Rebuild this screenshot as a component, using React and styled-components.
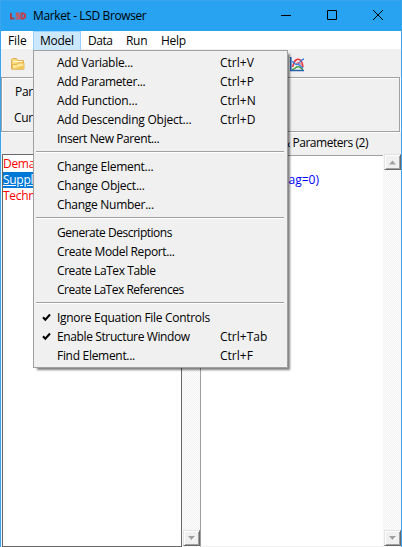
import React from "react";
import styled, { createGlobalStyle } from "styled-components";

const GlobalStyle = createGlobalStyle`
  * { box-sizing: border-box; }
  body { margin: 0; overflow: hidden; }
`;

const Window = styled.main`
  position: relative;
  display: flex;
  flex-direction: column;
  width: 402px;
  height: 547px;
  border: solid #3aa5ec;
  border-width: 0 1px;
  background: #f0f0f0;
  color: #000;
  font: 12px/16px "Open Sans", "Noto Sans", sans-serif;
  overflow: hidden;
  white-space: nowrap;
`;

const Label = styled.span`
  letter-spacing: ${(p) => p.$track ?? -0.3}px;
`;

const TitleBar = styled.header`
  display: flex;
  align-items: center;
  height: 31px;
  flex: none;
  padding-left: 8px;
  background: #27a3f2;
  border-top: 1px solid #3aa5ec;
`;

const Title = styled.h1`
  flex: 1;
  margin: 0 0 0 6px;
  font-size: 12px;
  font-weight: 400;
`;

const WindowButton = styled.button`
  display: flex;
  align-items: center;
  justify-content: center;
  width: 46px;
  height: 30px;
  padding: 0 0 2px;
  border: 0;
  background: none;
`;

const MenuBar = styled.nav`
  display: flex;
  flex: none;
  height: 18px;
  background: #fff;
`;

const MenuButton = styled.button`
  width: ${(p) => p.$width}px;
  height: 19px;
  padding: 0 0 0 ${(p) => p.$pad ?? 7}px;
  text-align: left;
  font: inherit;
  line-height: 18px;
  border: 1px solid ${(p) => (p.$open ? "#99d1ff" : "transparent")};
  border-width: 1px 1px 0;
  background: ${(p) => (p.$open ? "#cce8ff" : "transparent")};
`;

const Toolbar = styled.div`
  display: flex;
  justify-content: space-between;
  flex: none;
  height: 28px;
  padding: 8px 96px 0 9px;
`;

const InfoFrame = styled.section`
  display: flex;
  flex-direction: column;
  gap: 10px;
  flex: none;
  height: 55px;
  margin-right: 1px;
  padding: 6px 0 0 12px;
  border: 1px solid #a0a0a0;
  box-shadow: inset 1px 1px #fff, 0 1px #fff, 1px 0 #fff;
`;

const InfoLine = styled.div`
  padding-left: ${(p) => p.$indent}px;
`;

const Panes = styled.div`
  display: grid;
  grid-template-columns: 199px 201px;
  flex: 1;
`;

const Pane = styled.section`
  display: flex;
  flex-direction: column;
`;

const PaneHeader = styled.h2`
  height: 22px;
  margin: 0;
  padding: 3px 33px 0 0;
  text-align: right;
  font-size: 12px;
  font-weight: 400;
`;

const ListBody = styled.div`
  display: flex;
  flex: 1;
`;

const List = styled.div`
  flex: 1;
  padding-top: ${(p) => (p.$main ? 1 : 16)}px;
  background: #fff;
  border: solid ${(p) => (p.$main ? "#696969" : "#a0a0a0")};
  border-width: 1px 0 0 1px;
  margin-top: ${(p) => (p.$main ? 0 : 1)}px;
  border-bottom: 1px solid ${(p) => (p.$main ? "#696969" : "#f0f0f0")};
  ${(p) => p.$main && "border-right: 1px solid #696969; margin-left: 1px;"}
`;

const ListItem = styled.div`
  height: 16px;
  line-height: 15px;
  padding-left: ${(p) => p.$indent ?? 0}px;
  color: ${(p) => p.$color};
  background: ${(p) => (p.$selected ? "#0078d7" : "none")};
  text-decoration: ${(p) => (p.$selected ? "underline" : "none")};
`;

const ScrollTrack = styled.div`
  display: flex;
  flex-direction: column;
  justify-content: space-between;
  align-items: flex-end;
  width: 18px;
  padding-bottom: 1px;
  background: repeating-conic-gradient(#fff 0 25%, #f0f0f0 0 50%) 0 0 / 2px 2px;
`;

const ScrollButton = styled.button`
  display: flex;
  align-items: center;
  justify-content: center;
  width: 17px;
  height: 16px;
  padding: 0;
  background: #f0f0f0;
  border: 1px solid;
  border-color: #e3e3e3 #696969 #696969 #e3e3e3;
  box-shadow: inset 1px 1px #fff, inset -1px -1px #a0a0a0;
`;

const Popup = styled.div`
  position: absolute;
  left: 32px;
  top: 50px;
  width: 255px;
  height: 318px;
  padding: 3px 2px;
  background: #f0f0f0;
  border: 1px solid #a0a0a0;
  box-shadow: 3px 3px 2px -1px rgba(0, 0, 0, 0.5);
`;

const MenuItem = styled.div`
  display: grid;
  grid-template-columns: 21px 163px 1fr;
  height: 19px;
  line-height: 18px;
`;

const Check = styled.svg`
  width: 9px;
  height: 9px;
  margin: 4px 0 0 6px;
`;

const Separator = styled.hr`
  height: 2px;
  margin: 2px 1px 5px 0;
  border: 0;
  border-top: 1px solid #a0a0a0;
  background: #fff;
`;

const MENU = [
  { label: "Add Variable...", keys: "Ctrl+V", track: -0.3 },
  { label: "Add Parameter...", keys: "Ctrl+P", track: -0.36 },
  { label: "Add Function...", keys: "Ctrl+N", track: -0.2 },
  { label: "Add Descending Object...", keys: "Ctrl+D", track: -0.22 },
  { label: "Insert New Parent...", track: -0.4 },
  null,
  { label: "Change Element...", track: -0.26 },
  { label: "Change Object...", track: -0.22 },
  { label: "Change Number...", track: -0.28 },
  null,
  { label: "Generate Descriptions", track: -0.48 },
  { label: "Create Model Report...", track: -0.36 },
  { label: "Create LaTex Table", track: -0.42 },
  { label: "Create LaTex References", track: -0.48 },
  null,
  { label: "Ignore Equation File Controls", checked: true, track: -0.3 },
  { label: "Enable Structure Window", keys: "Ctrl+Tab", checked: true, track: -0.38 },
  { label: "Find Element...", keys: "Ctrl+F", track: -0.3 },
];

const LsdLogo = () => (
  <svg width="18" height="8" viewBox="0 0 18 8" fill="none" strokeWidth="1.9">
    <path d="M2 1v5.500h3.500" stroke="#a63c48" />
    <path d="M10.500 1.500H7.700v2.300h2.500v2.700H6.800" stroke="#c45a60" />
    <path d="M12.500 1.400h1.800l1.800 1.400v2.400l-1.800 1.400h-1.800z" stroke="#c83a44" />
  </svg>
);

const FolderIcon = () => (
  <svg width="16" height="14" viewBox="0 0 16 14">
    <path d="M1.500 12V2.500l1-1h4l1.500 2h5.500V12z" fill="#f8d978" stroke="#dcae58" />
    <path d="M2 12l.5-4.500h4.500l1-1.500h6V12z" fill="#ffe79a" stroke="#dfa83c" strokeWidth=".8" />
    <path d="M3 11.800h10.800V8.500L8 10z" fill="#f2c654" />
    <path d="M3 4.500h9" stroke="#fff8d6" />
  </svg>
);

const PlotIcon = () => (
  <svg width="15" height="15" viewBox="0 0 15 15" fill="none">
    <path d="M2 12.500C5 12.500 5.500 9.700 8 9.700s3 2 5 2.800" stroke="#44a13e" strokeWidth="1.500" />
    <path d="M2.500 10C4 5 5 2.200 8 2.200s4.500 3 5 7.800" stroke="#ea3037" strokeWidth="1.500" />
    <path d="M2 4.500c2 0 2.500 3.500 5 3S10.500 2.500 14 2M8 7.500c2 0 3 2 5 3.500" stroke="#3b7de0" strokeWidth="1.400" />
    <path d="M6 6.500c3-2 5 0 7 3.500" stroke="#ea5960" />
    <path d="M.8 0v13.500H14" stroke="#2861ad" strokeWidth="1.600" />
  </svg>
);

const Arrow = ({ down }) => (
  <svg width="8" height="5" viewBox="0 0 8 5">
    {down && <path d="M1 1h7L4.500 5z" fill="#fff" />}
    <path d={down ? "M0 0h7L3.500 4z" : "M0 4.500h7L3.500 .5z"} fill="#a0a0a0" />
  </svg>
);

const Scrollbar = () => (
  <ScrollTrack>
    <ScrollButton aria-label="Scroll up"><Arrow /></ScrollButton>
    <ScrollButton aria-label="Scroll down"><Arrow down /></ScrollButton>
  </ScrollTrack>
);

export default function App() {
  return (
    <>
      <GlobalStyle />
      <Window>
        <TitleBar>
          <LsdLogo />
          <Title><Label $track={-0.38}>Market - LSD Browser</Label></Title>
          <WindowButton aria-label="Minimize">
            <svg width="10" height="10"><path d="M0 5.500h10" stroke="#000" /></svg>
          </WindowButton>
          <WindowButton aria-label="Maximize">
            <svg width="10" height="10"><path d="M.5.5h9v9h-9z" stroke="#000" fill="none" /></svg>
          </WindowButton>
          <WindowButton aria-label="Close">
            <svg width="10" height="10"><path d="M0 0l10 10M10 0L0 10" stroke="#000" /></svg>
          </WindowButton>
        </TitleBar>
        <MenuBar>
          <MenuButton $width={32} $pad={6}><Label $track={-0.1}>File</Label></MenuButton>
          <MenuButton $width={48} $pad={6} $open><Label>Model</Label></MenuButton>
          <MenuButton $width={38} $pad={6}><Label $track={-0.5}>Data</Label></MenuButton>
          <MenuButton $width={34} $pad={6}><Label>Run</Label></MenuButton>
          <MenuButton $width={40}><Label>Help</Label></MenuButton>
        </MenuBar>
        <Toolbar><FolderIcon /><PlotIcon /></Toolbar>
        <InfoFrame>
          <InfoLine $indent={1}><Label>Parent</Label></InfoLine>
          <InfoLine $indent={0}><Label>Current</Label></InfoLine>
        </InfoFrame>
        <Panes>
          <Pane>
            <PaneHeader />
            <ListBody>
              <List $main>
                <ListItem $color="#f00"><Label>Demand</Label></ListItem>
                <ListItem $color="#fff" $selected><Label>Supply</Label></ListItem>
                <ListItem $color="#f00"><Label>Technology</Label></ListItem>
              </List>
              <Scrollbar />
            </ListBody>
          </Pane>
          <Pane>
            <PaneHeader><Label $track={-0.46}>&amp; Parameters (2)</Label></PaneHeader>
            <ListBody>
              <List>
                <ListItem $color="#00f" $indent={81}><Label $track={0}>(lag=0)</Label></ListItem>
              </List>
              <Scrollbar />
            </ListBody>
          </Pane>
        </Panes>
        <Popup>
          {MENU.map((item, i) =>
            item ? (
              <MenuItem key={item.label}>
                <span>
                  {item.checked && (
                    <Check viewBox="0 0 9 9">
                      <path d="M1 4.300l2.300 2.400L8 1.500" fill="none" stroke="#000" strokeWidth="2" />
                    </Check>
                  )}
                </span>
                <Label $track={item.track}>{item.label}</Label>
                <Label $track={0}>{item.keys}</Label>
              </MenuItem>
            ) : (
              <Separator key={i} />
            )
          )}
        </Popup>
      </Window>
    </>
  );
}
